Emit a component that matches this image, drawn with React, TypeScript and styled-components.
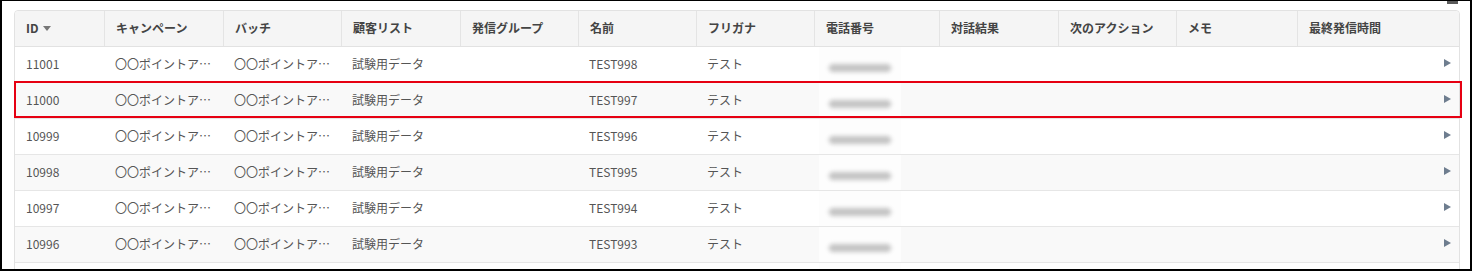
import styled, { createGlobalStyle } from "styled-components";

const GlobalStyle = createGlobalStyle`
  html, body { margin: 0; padding: 0; background: #fff; }
  body { font-family: "Noto Sans CJK JP", "Noto Sans", sans-serif; }
`;

const COLUMNS = [
  { key: "id", label: "ID", width: 89 },
  { key: "campaign", label: "キャンペーン", width: 119 },
  { key: "batch", label: "バッチ", width: 118 },
  { key: "list", label: "顧客リスト", width: 119 },
  { key: "group", label: "発信グループ", width: 118 },
  { key: "name", label: "名前", width: 118 },
  { key: "kana", label: "フリガナ", width: 118 },
  { key: "phone", label: "電話番号", width: 125 },
  { key: "result", label: "対話結果", width: 119 },
  { key: "next", label: "次のアクション", width: 118 },
  { key: "memo", label: "メモ", width: 121 },
  { key: "last", label: "最終発信時間", width: 164 },
];

const GRID = COLUMNS.map((c) => `${c.width}px`).join(" ");

const ROWS = [
  { id: "11001", name: "TEST998" },
  { id: "11000", name: "TEST997", selected: true },
  { id: "10999", name: "TEST996" },
  { id: "10998", name: "TEST995" },
  { id: "10997", name: "TEST994" },
  { id: "10996", name: "TEST993" },
];

const Frame = styled.div`
  position: relative;
  box-sizing: border-box;
  width: 1472px;
  height: 271px;
  overflow: hidden;
  border-style: solid;
  border-color: #000;
  border-width: 1px 2px 2px 2px;
  padding: 9px 0 0 12px;
`;

const ScrollMark = styled.div`
  position: absolute;
  top: 0;
  left: 1445px;
  width: 11px;
  height: 3px;
  background: #5a5a5a;
`;

const Table = styled.div`
  width: 1446px;
  border: 1px solid #e2e2e2;
  border-radius: 4px 4px 0 0;
  box-sizing: border-box;
  color: #555;
  font-size: 12px;
`;

const HeaderRow = styled.div`
  display: grid;
  grid-template-columns: ${GRID};
  height: 35px;
  background: #f5f5f5;
  border-bottom: 1px solid #e2e2e2;
  border-radius: 4px 4px 0 0;
`;

const HeaderCell = styled.div`
  display: flex;
  align-items: center;
  gap: 4px;
  padding: 0 11px 2px;
  font-weight: bold;
  color: #444;
  border-left: 1px solid #e4e4e4;
  white-space: nowrap;
  &:first-child { border-left: none; }
`;

const SortArrow = styled.span`
  display: inline-block;
  width: 0;
  height: 0;
  border-left: 4px solid transparent;
  border-right: 4px solid transparent;
  border-top: 5px solid #777;
  margin-top: 1px;
`;

const BodyRow = styled.div<{ $striped: boolean; $selected?: boolean }>`
  position: relative;
  display: grid;
  grid-template-columns: ${GRID};
  height: 36px;
  box-sizing: border-box;
  background: ${(p) => (p.$striped ? "#f9f9f9" : "#fff")};
  border-bottom: 1px solid #e6e6e6;
  ${(p) =>
    p.$selected &&
    `
    &::after {
      content: "";
      position: absolute;
      left: -1px;
      right: -3px;
      top: -2px;
      bottom: 0;
      border: 2px solid #e60012;
      pointer-events: none;
    }
  `}
`;

const Cell = styled.div`
  display: flex;
  align-items: center;
  padding: 0 6px 3px 11px;
  white-space: nowrap;
`;

const PhoneCell = styled.div`
  display: flex;
  align-items: center;
  padding-left: 5px;
`;

const PhoneMask = styled.div`
  width: 82px;
  height: 100%;
  background: #fdfdfd;
  display: flex;
  align-items: center;
  justify-content: center;
  padding-top: 6px;
  box-sizing: border-box;
`;

const Blur = styled.span`
  width: 62px;
  height: 8px;
  border-radius: 4px;
  background: #c4c4c4;
  filter: blur(2px);
`;

const ArrowCell = styled.div`
  display: flex;
  align-items: center;
  justify-content: flex-end;
  padding: 0 10px 3px 0;
`;

const Arrow = styled.span`
  width: 0;
  height: 0;
  border-top: 4.5px solid transparent;
  border-bottom: 4.5px solid transparent;
  border-left: 7px solid #6e7d8f;
`;

const App = () => (
  <>
    <GlobalStyle />
    <Frame>
      <ScrollMark />
      <Table>
        <HeaderRow>
          {COLUMNS.map((c) => (
            <HeaderCell key={c.key}>
              {c.label}
              {c.key === "id" && <SortArrow />}
            </HeaderCell>
          ))}
        </HeaderRow>
        {ROWS.map((row, i) => (
          <BodyRow key={row.id} $striped={i % 2 === 1} $selected={row.selected}>
            <Cell>{row.id}</Cell>
            <Cell>〇〇ポイントア⋯</Cell>
            <Cell>〇〇ポイントア⋯</Cell>
            <Cell>試験用データ</Cell>
            <Cell />
            <Cell>{row.name}</Cell>
            <Cell>テスト</Cell>
            <PhoneCell>
              <PhoneMask>
                <Blur />
              </PhoneMask>
            </PhoneCell>
            <Cell />
            <Cell />
            <Cell />
            <ArrowCell>
              <Arrow />
            </ArrowCell>
          </BodyRow>
        ))}
        <BodyRow $striped={false}>
          {COLUMNS.map((c) =>
            c.key === "phone" ? (
              <PhoneCell key={c.key}>
                <PhoneMask />
              </PhoneCell>
            ) : (
              <Cell key={c.key} />
            )
          )}
        </BodyRow>
      </Table>
    </Frame>
  </>
);

export default App;
